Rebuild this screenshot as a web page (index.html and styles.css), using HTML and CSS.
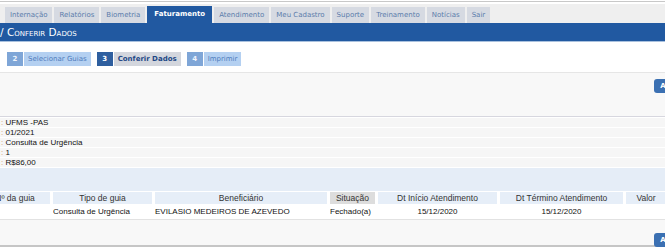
FILE: index.html
```html
<!DOCTYPE html>
<html lang="pt-BR">
<head>
  <meta charset="UTF-8">
  <title>Faturamento - Conferir Dados</title>
  <link rel="stylesheet" href="styles.css">
</head>
<body>
  <div id="topLine"></div>
  <div id="tabBar">
    <div class="tab">Internação</div>
    <div class="tab">Relatórios</div>
    <div class="tab">Biometria</div>
    <div class="tab active">Faturamento</div>
    <div class="tab">Atendimento</div>
    <div class="tab">Meu Cadastro</div>
    <div class="tab">Suporte</div>
    <div class="tab">Treinamento</div>
    <div class="tab">Notícias</div>
    <div class="tab">Sair</div>
  </div>
  <div id="titleBar">/ Conferir Dados</div>

  <div id="steps">
    <div class="step"><span class="num">2</span><span class="label">Selecionar Guias</span></div>
    <div class="step current"><span class="num">3</span><span class="label">Conferir Dados</span></div>
    <div class="step"><span class="num">4</span><span class="label">Imprimir</span></div>
  </div>

  <div class="actions tall">
    <button class="btn">Avançar</button>
  </div>

  <div id="info">
    <div class="row"><span class="sep">:</span> UFMS -PAS</div>
    <div class="row"><span class="sep">:</span> 01/2021</div>
    <div class="row"><span class="sep">:</span> Consulta de Urgência</div>
    <div class="row"><span class="sep">:</span> 1</div>
    <div class="row"><span class="sep">:</span> R$86,00</div>
  </div>
  <div id="spacer"></div>

  <div id="gridWrap">
    <table id="grid">
      <colgroup>
        <col class="c-num"><col class="c-tipo"><col class="c-benef"><col class="c-sit">
        <col class="c-ini"><col class="c-fim"><col class="c-valor">
      </colgroup>
      <thead>
        <tr>
          <th>Nº da guia</th>
          <th>Tipo de guia</th>
          <th>Beneficiário</th>
          <th class="sorted">Situação</th>
          <th>Dt Início Atendimento</th>
          <th>Dt Término Atendimento</th>
          <th>Valor</th>
        </tr>
      </thead>
      <tbody>
        <tr>
          <td></td>
          <td>Consulta de Urgência</td>
          <td>EVILASIO MEDEIROS DE AZEVEDO</td>
          <td>Fechado(a)</td>
          <td class="center">15/12/2020</td>
          <td class="center">15/12/2020</td>
          <td></td>
        </tr>
      </tbody>
    </table>
  </div>

  <div class="actions bottom">
    <button class="btn">Avançar</button>
  </div>
</body>
</html>
```

FILE: styles.css
```css
body {
  margin: 0;
  width: 665px;
  height: 248px;
  overflow: hidden;
  background: #fff;
  font-family: "Liberation Sans", Arial, sans-serif;
  font-size: 8px;
  color: #111;
}
#topLine {
  height: 1px;
  margin-top: 1px;
  background: #c8c8c8;
}
#tabBar {
  display: flex;
  align-items: flex-end;
  gap: 2px;
  height: 19px;
  margin-top: 2px;
  padding-left: 5px;
  background: #efefef;
  font-family: "DejaVu Sans", Verdana, sans-serif;
}
.tab {
  height: 16px;
  line-height: 16px;
  padding: 0 5px;
  background: #d6dae2;
  color: #5b7cab;
  font-size: 7px;
  white-space: nowrap;
}
.tab.active {
  height: 17px;
  line-height: 17px;
  background: #2159a1;
  color: #fff;
  font-weight: bold;
  padding: 0 7px;
}
#titleBar {
  height: 18px;
  line-height: 18px;
  background: #2159a1;
  border-bottom: 1px solid #a9c1de;
  color: #fff;
  font-family: "DejaVu Sans", Verdana, sans-serif;
  font-size: 10.5px;
  font-variant: small-caps;
  white-space: nowrap;
}
#steps {
  display: flex;
  gap: 6px;
  height: 31px;
  padding: 10px 0 0 7px;
  box-sizing: border-box;
  border-bottom: 1px solid #e6e6e6;
  font-family: "DejaVu Sans", Verdana, sans-serif;
  font-size: 7px;
}
.step {
  display: flex;
  height: 14px;
  line-height: 14px;
  gap: 1px;
}
.step .num {
  width: 16px;
  text-align: center;
  background: #7fa6d7;
  color: #eef4fc;
  font-weight: bold;
}
.step .label {
  padding: 0 4px;
  background: #b4d0f1;
  color: #4f7cbd;
}
.step.current .num {
  background: #2f5f9f;
  color: #fff;
}
.step.current .label {
  background: #d3d6dd;
  color: #1f4886;
  font-weight: bold;
}
.actions {
  display: flex;
  justify-content: flex-end;
  background: #f8f8f8;
  box-sizing: border-box;
}
.actions.tall {
  height: 44px;
  padding-top: 6px;
  border-bottom: 1px solid #d7d7df;
}
.actions.bottom {
  height: 27px;
  padding-top: 13px;
  border-bottom: 2px solid #c6c6c6;
}
.btn {
  height: 14px;
  margin-right: -33px;
  padding: 0 6px;
  border: none;
  border-radius: 3px;
  background: #3b70b2;
  color: #fff;
  font-family: "DejaVu Sans", Verdana, sans-serif;
  font-size: 7px;
  font-weight: bold;
}
#info {
  padding-top: 1px;
}
#info .row {
  height: 9px;
  line-height: 9px;
  padding-left: 1px;
  background: #f6f6f6;
  border-bottom: 1px solid #fff;
  white-space: nowrap;
}
#info .sep {
  color: #d5955d;
}
#spacer {
  height: 23px;
  background: #e5edf7;
}
#gridWrap {
  overflow: hidden;
  border-bottom: 1px solid #e2e2e2;
}
#grid {
  margin-left: -23px;
  margin-top: 1px;
  table-layout: fixed;
  border-collapse: separate;
  border-spacing: 3px 0;
  width: 692px;
}
.c-num { width: 70px; }
.c-tipo { width: 99px; }
.c-benef { width: 172px; }
.c-sit { width: 45px; }
.c-ini { width: 119px; }
.c-fim { width: 123px; }
.c-valor { width: 40px; }
#grid th {
  height: 12px;
  padding: 0;
  background: #e6eef8;
  color: #333;
  font-size: 8.5px;
  font-weight: normal;
  text-align: center;
  white-space: nowrap;
  overflow: hidden;
}
#grid th.sorted {
  background: #dddddd;
}
#grid td {
  height: 15px;
  padding: 0;
  white-space: nowrap;
  overflow: hidden;
}
#grid td.center {
  text-align: center;
}
```
